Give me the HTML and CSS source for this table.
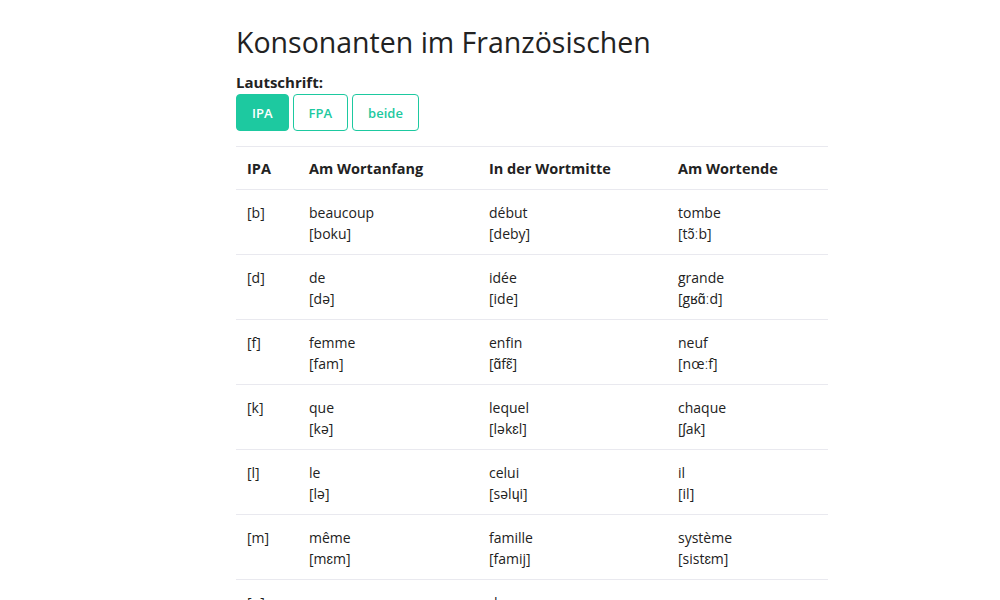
FILE: index.html
```html
<!DOCTYPE html>
<html lang="de">
<head>
    <meta charset="UTF-8">
    <meta name="viewport" content="width=device-width, initial-scale=1.0">
    <title>Konsonanten im Französischen</title>
    <link rel="stylesheet" href="styles.css">
</head>
<body>
    <div class="page">
        <h1>Konsonanten im Französischen</h1>

        <!-- Lautschrift Auswahl -->
        <div class="label">Lautschrift:</div>
        <div class="switch">
            <button class="active">IPA</button>
            <button>FPA</button>
            <button>beide</button>
        </div>

        <!-- Tabelle -->
        <table class="sounds">
            <colgroup>
                <col class="c-ipa">
                <col class="c-start">
                <col class="c-mid">
                <col class="c-end">
            </colgroup>
            <thead>
                <tr>
                    <th>IPA</th>
                    <th>Am Wortanfang</th>
                    <th>In der Wortmitte</th>
                    <th>Am Wortende</th>
                </tr>
            </thead>
            <tbody>
                <tr>
                    <td>[b]</td>
                    <td>beaucoup<br><span class="ph">[boku]</span></td>
                    <td>début<br><span class="ph">[deby]</span></td>
                    <td>tombe<br><span class="ph">[tɔ̃ːb]</span></td>
                </tr>
                <tr>
                    <td>[d]</td>
                    <td>de<br><span class="ph">[də]</span></td>
                    <td>idée<br><span class="ph">[ide]</span></td>
                    <td>grande<br><span class="ph">[gʁɑ̃ːd]</span></td>
                </tr>
                <tr>
                    <td>[f]</td>
                    <td>femme<br><span class="ph">[fam]</span></td>
                    <td>enfin<br><span class="ph">[ɑ̃fɛ̃]</span></td>
                    <td>neuf<br><span class="ph">[nœːf]</span></td>
                </tr>
                <tr>
                    <td>[k]</td>
                    <td>que<br><span class="ph">[kə]</span></td>
                    <td>lequel<br><span class="ph">[ləkɛl]</span></td>
                    <td>chaque<br><span class="ph">[ʃak]</span></td>
                </tr>
                <tr>
                    <td>[l]</td>
                    <td>le<br><span class="ph">[lə]</span></td>
                    <td>celui<br><span class="ph">[səlɥi]</span></td>
                    <td>il<br><span class="ph">[il]</span></td>
                </tr>
                <tr>
                    <td>[m]</td>
                    <td>même<br><span class="ph">[mɛm]</span></td>
                    <td>famille<br><span class="ph">[famij]</span></td>
                    <td>système<br><span class="ph">[sistɛm]</span></td>
                </tr>
                <tr>
                    <td>[n]</td>
                    <td>nous<br><span class="ph">[nu]</span></td>
                    <td>donner<br><span class="ph">[dɔne]</span></td>
                    <td>une<br><span class="ph">[yn]</span></td>
                </tr>
            </tbody>
        </table>
    </div>
</body>
</html>
```

FILE: styles.css
```css
body {
    margin: 0;
    font-family: "Open Sans", Arial, sans-serif;
    font-size: 14px;
    color: #222;
    background-color: #fff;
}

.page {
    width: 592px;
    margin-left: 236px;
}

h1 {
    font-size: 28.5px;
    font-weight: 400;
    line-height: 36px;
    margin: 24px 0 12px;
}

.label {
    font-size: 15px;
    font-weight: 700;
    line-height: 20px;
    margin-bottom: 2px;
}

/* Umschalter */
.switch {
    display: flex;
    gap: 4px;
    margin-bottom: 15px;
}

.switch button {
    font-family: inherit;
    font-size: 13px;
    font-weight: 600;
    height: 37px;
    padding: 0 15px;
    background-color: #fff;
    color: #1dc9a0;
    border: 1px solid #1dc9a0;
    border-radius: 4px;
    cursor: pointer;
}

.switch button.active {
    background-color: #1dc9a0;
    color: #fff;
}

/* Tabelle */
.sounds {
    width: 592px;
    border-collapse: collapse;
    table-layout: fixed;
}

.c-ipa { width: 62px; }
.c-start { width: 180px; }
.c-mid { width: 189px; }
.c-end { width: 161px; }

.sounds th,
.sounds td {
    text-align: left;
    vertical-align: top;
    padding: 12px 11px 10px;
    line-height: 21px;
    border-top: 1px solid #e9e9ef;
}

.sounds th {
    font-size: 14.5px;
    font-weight: 700;
    padding: 11px 11px 10px;
}
```
